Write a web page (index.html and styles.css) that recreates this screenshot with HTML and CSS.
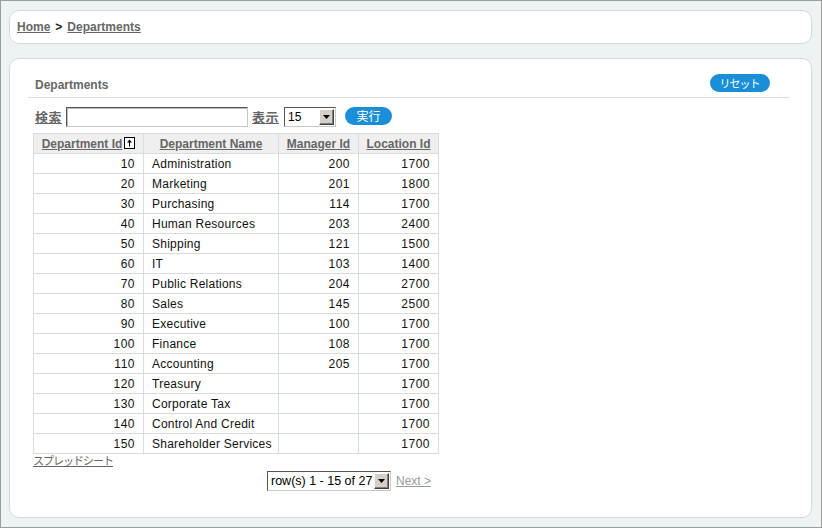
FILE: index.html
```html
<!DOCTYPE html>
<html>
<head>
<meta charset="utf-8">
<link rel="stylesheet" href="styles.css">
</head>
<body>
<div class="frame">
  <div class="crumbs">
    <a class="crumb" href="#">Home</a><span class="sep">&gt;</span><a class="crumb" href="#">Departments</a>
  </div>
  <div class="region">
    <div class="region-head">
      <span class="region-title">Departments</span>
      <span class="pill reset">リセット</span>
    </div>
    <div class="search">
      <a class="lbl" href="#">検索</a>
      <span class="input"></span>
      <a class="lbl" href="#">表示</a>
      <span class="select small"><span class="sel-text">15</span><span class="arrow"><svg width="7" height="4" viewBox="0 0 7 4"><path d="M0 0h7L3.5 4z" fill="#000"/></svg></span></span>
      <span class="pill go">実行</span>
    </div>
    <div class="report">
      <table class="grid">
        <thead>
          <tr>
            <th class="c1"><a href="#">Department Id</a><span class="sort"><svg width="11" height="12" viewBox="0 0 11 12"><rect x="0.5" y="0.5" width="10" height="11" fill="#fff" stroke="#000"/><path d="M5.5 2.5L3 5.5h2v4h1v-4h2z" fill="#000"/></svg></span></th>
            <th class="c2"><a href="#">Department Name</a></th>
            <th class="c3"><a href="#">Manager Id</a></th>
            <th class="c4"><a href="#">Location Id</a></th>
          </tr>
        </thead>
        <tbody>
          <tr><td class="n">10</td><td>Administration</td><td class="n">200</td><td class="n">1700</td></tr>
          <tr><td class="n">20</td><td>Marketing</td><td class="n">201</td><td class="n">1800</td></tr>
          <tr><td class="n">30</td><td>Purchasing</td><td class="n">114</td><td class="n">1700</td></tr>
          <tr><td class="n">40</td><td>Human Resources</td><td class="n">203</td><td class="n">2400</td></tr>
          <tr><td class="n">50</td><td>Shipping</td><td class="n">121</td><td class="n">1500</td></tr>
          <tr><td class="n">60</td><td>IT</td><td class="n">103</td><td class="n">1400</td></tr>
          <tr><td class="n">70</td><td>Public Relations</td><td class="n">204</td><td class="n">2700</td></tr>
          <tr><td class="n">80</td><td>Sales</td><td class="n">145</td><td class="n">2500</td></tr>
          <tr><td class="n">90</td><td>Executive</td><td class="n">100</td><td class="n">1700</td></tr>
          <tr><td class="n">100</td><td>Finance</td><td class="n">108</td><td class="n">1700</td></tr>
          <tr><td class="n">110</td><td>Accounting</td><td class="n">205</td><td class="n">1700</td></tr>
          <tr><td class="n">120</td><td>Treasury</td><td class="n"></td><td class="n">1700</td></tr>
          <tr><td class="n">130</td><td>Corporate Tax</td><td class="n"></td><td class="n">1700</td></tr>
          <tr><td class="n">140</td><td>Control And Credit</td><td class="n"></td><td class="n">1700</td></tr>
          <tr><td class="n">150</td><td>Shareholder Services</td><td class="n"></td><td class="n">1700</td></tr>
        </tbody>
      </table>
      <a class="sheet" href="#">スプレッドシート</a>
      <div class="pager">
        <span class="select wide"><span class="sel-text">row(s) 1 - 15 of 27</span><span class="arrow"><svg width="7" height="4" viewBox="0 0 7 4"><path d="M0 0h7L3.5 4z" fill="#000"/></svg></span></span>
        <a class="next" href="#">Next &gt;</a>
      </div>
    </div>
  </div>
</div>
</body>
</html>
```

FILE: styles.css
```css
* { box-sizing: border-box; }
html, body { margin: 0; padding: 0; }
body {
  font-family: "Liberation Sans", Arial, "Noto Sans CJK JP", sans-serif;
  font-size: 12px;
  color: #000;
}
.frame {
  width: 822px;
  height: 528px;
  border: 1px solid #9c9c9c;
  background: #edf2f3;
  padding: 9px 9px 0 8px;
  display: flex;
  flex-direction: column;
}
.crumbs {
  height: 34px;
  background: #fff;
  border: 1px solid #d3dadc;
  border-radius: 10px;
  padding: 0 0 1px 7px;
  display: flex;
  align-items: center;
  font-weight: bold;
  font-size: 12px;
  line-height: 14px;
}
.crumb { color: #666; text-decoration: underline; }
.sep { color: #222; margin: 0 5px 0 5px; }
.region {
  margin-top: 14px;
  height: 460px;
  background: #fff;
  border: 1px solid #d3dadc;
  border-radius: 10px;
  padding: 0 21px 0 18px;
}
.region-head {
  margin-top: 14px;
  height: 25px;
  border-bottom: 1px solid #dcdfe0;
  display: flex;
  justify-content: space-between;
  align-items: flex-start;
  padding: 0 20px 0 7px;
}
.region-title {
  margin-top: 5px;
  font-weight: bold;
  color: #666;
  line-height: 14px;
}
.pill {
  display: inline-flex;
  align-items: center;
  justify-content: center;
  background: #1a8fd8;
  color: #fff;
  border-radius: 9px;
  font-family: "Noto Sans CJK JP", sans-serif;
  font-size: 12px;
  line-height: 14px;
}
.reset { width: 60px; height: 18px; margin-top: 1px; font-size: 11px; letter-spacing: -1px; padding-right: 1px; }
.search {
  margin: 9px 0 0 7px;
  height: 20px;
  display: flex;
  align-items: center;
}
.lbl {
  color: #666;
  font-weight: bold;
  font-family: "Noto Sans CJK JP", sans-serif;
  font-size: 13px;
  letter-spacing: 0.5px;
  text-decoration: underline;
  line-height: 14px;
}
.input {
  width: 182px;
  height: 20px;
  margin: 0 4px 0 4px;
  border: 1px solid #c8c8c8;
  border-top-color: #555;
  border-left-color: #555;
  box-shadow: inset 1px 1px 0 #bbb;
  background: #fff;
}
.select {
  display: inline-flex;
  align-items: center;
  height: 20px;
  border: 1px solid #c8c8c8;
  border-top-color: #555;
  border-left-color: #555;
  background: #fff;
  padding: 1px 1px 1px 2px;
  font-size: 12px;
}
.select.small { width: 52px; margin-left: 5px; }
.select .sel-text { flex: 1; padding-left: 1px; line-height: 14px; }
.arrow {
  width: 15px;
  height: 16px;
  background: #d4d0c8;
  border: 1px solid #fff;
  border-right-color: #404040;
  border-bottom-color: #404040;
  box-shadow: inset -1px -1px 0 #808080;
  display: flex;
  align-items: center;
  justify-content: center;
}
.go { width: 47px; height: 18px; margin: 0 0 2px 9px; }
.report {
  margin: 6px 0 0 5px;
  width: 405px;
}
.grid {
  border-collapse: collapse;
  width: 405px;
  table-layout: fixed;
}
.grid th, .grid td {
  border: 1px solid #d7dcdc;
  height: 20px;
  padding: 0 8px 0 8px;
  line-height: 14px;
  white-space: nowrap;
}
.grid th {
  background: #efefef;
  font-weight: bold;
  text-align: center;
  color: #666;
  padding: 0;
}
.grid th a { color: #666; text-decoration: underline; }
.grid .c1 { width: 110px; }
.grid .c2 { width: 135px; }
.grid .c3 { width: 80px; }
.grid .c4 { width: 80px; }
.grid td { color: #111; padding-left: 8px; letter-spacing: 0.25px; }
.grid td.n { text-align: right; padding-right: 8px; letter-spacing: 0.5px; }
.sort { display: inline-block; vertical-align: -1px; margin-left: 2px; }
.sort svg { display: block; }
.sheet {
  display: block;
  color: #666;
  font-family: "Noto Sans CJK JP", sans-serif;
  font-size: 11px;
  letter-spacing: -1px;
  line-height: 12px;
  text-decoration: underline;
  width: max-content;
}
.pager {
  margin-top: 5px;
  display: flex;
  justify-content: flex-end;
  align-items: center;
  padding-right: 7px;
}
.select.wide { width: 124px; height: 20px; font-size: 12.5px; }
.next {
  margin-left: 5px;
  color: #999;
  text-decoration: underline;
  font-size: 12px;
}
```
